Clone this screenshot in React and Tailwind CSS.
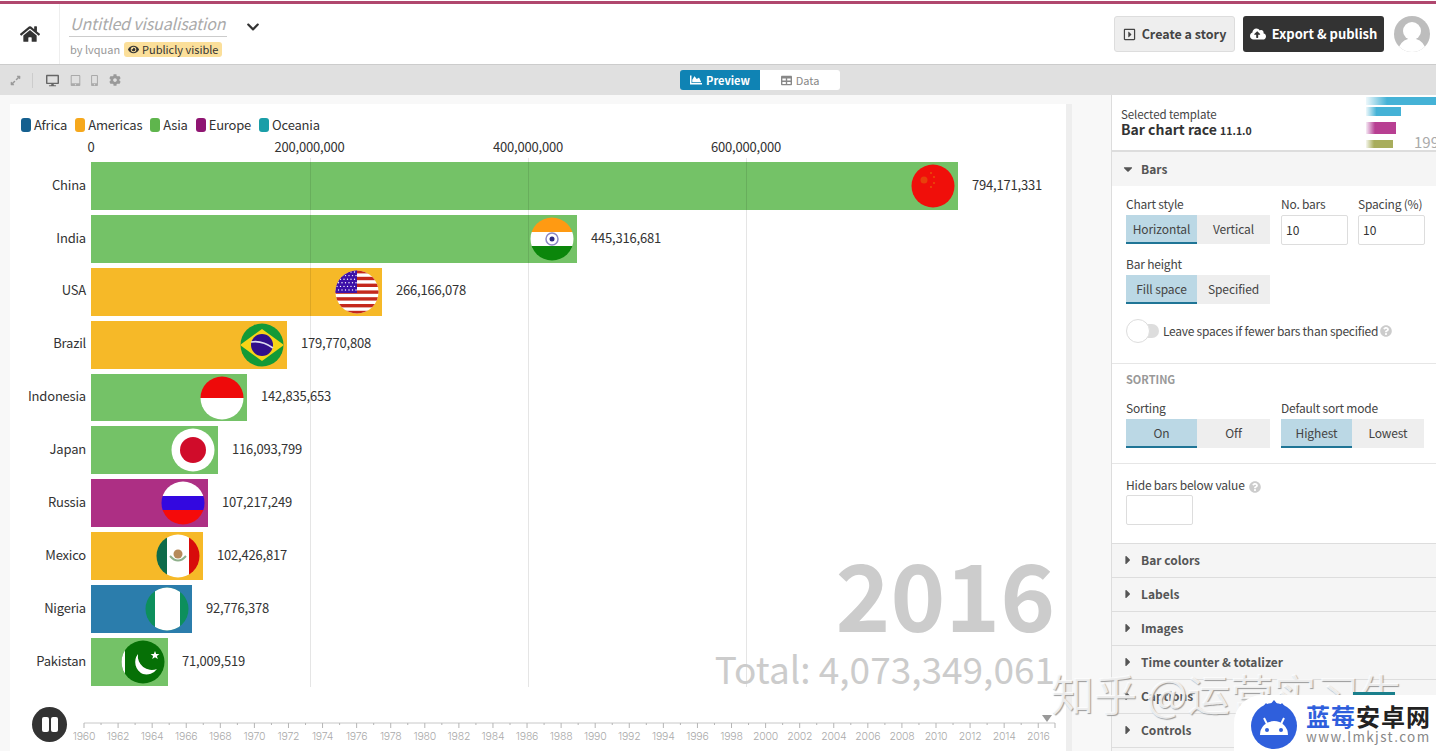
import React from 'react';
import {
  FaHome, FaChevronDown, FaEye, FaCloudUploadAlt, FaCog, FaExpandAlt, FaDesktop, FaTabletAlt,
  FaMobileAlt, FaChartArea, FaTable, FaCaretDown, FaCaretRight, FaQuestionCircle, FaRegCaretSquareRight,
} from 'react-icons/fa';

const GREEN = 'bg-[#74c267]';
const AMBER = 'bg-[#f6b928]';
const PURPLE = 'bg-[#ad2f84]';
const BLUE = 'bg-[#2b7dac]';

const Disc = ({ children, id }) => (
  <svg width="44" height="44" viewBox="0 0 44 44" className="shrink-0">
    <defs>
      <clipPath id={id}>
        <circle cx="22" cy="22" r="21.5" />
      </clipPath>
    </defs>
    <g clipPath={`url(#${id})`}>{children}</g>
  </svg>
);

const China = () => (
  <Disc id="cn">
    <rect width="44" height="44" fill="#f00f0a" />
    <circle cx="13" cy="16" r="3.5" fill="#e8400a" />
    <circle cx="20" cy="9" r="1" fill="#e8500a" />
    <circle cx="23" cy="13" r="1" fill="#e8500a" />
    <circle cx="23" cy="19" r="1" fill="#e8500a" />
    <circle cx="20" cy="23" r="1" fill="#e8500a" />
  </Disc>
);
const India = () => (
  <Disc id="in">
    <rect width="44" height="15" fill="#ff9a12" />
    <rect y="15" width="44" height="14" fill="#fff" />
    <rect y="29" width="44" height="15" fill="#0b860b" />
    <circle cx="22" cy="22" r="6" fill="none" stroke="#8c88c4" strokeWidth="1.5" />
    <circle cx="22" cy="22" r="2.5" fill="#2b2a80" />
  </Disc>
);
const Usa = () => {
  const stripes = [0, 1, 2, 3, 4, 5, 6, 7, 8, 9, 10, 11, 12];
  const stars = [];
  for (let r = 0; r < 6; r++) for (let c = 0; c < 6; c++) stars.push([2 + c * 3.5 + (r % 2) * 1.5, 2 + r * 3.6]);
  return (
    <Disc id="us">
      <rect width="44" height="44" fill="#fff" />
      {stripes.map((i) => i % 2 === 0 && <rect key={i} y={i * 3.4} width="44" height="3.4" fill="#c4281c" />)}
      <rect width="22" height="23" fill="#3c10a8" />
      {stars.map(([x, y], i) => <circle key={i} cx={x} cy={y} r="0.7" fill="#fff" />)}
    </Disc>
  );
};
const Brazil = () => (
  <Disc id="br">
    <rect width="44" height="44" fill="#139a37" />
    <polygon points="0,22 22,6 44,22 22,38" fill="#f7d417" />
    <circle cx="22" cy="22" r="11" fill="#31108a" />
    <path d="M11 19 Q22 17 33 25" stroke="#dcdcf0" strokeWidth="1.6" fill="none" />
  </Disc>
);
const Indonesia = () => (
  <Disc id="id">
    <rect width="44" height="22" fill="#ee0a0a" />
    <rect y="22" width="44" height="22" fill="#fff" />
  </Disc>
);
const Japan = () => (
  <Disc id="jp">
    <rect width="44" height="44" fill="#fff" />
    <circle cx="22" cy="22" r="13" fill="#d00c2a" />
  </Disc>
);
const Russia = () => (
  <Disc id="ru">
    <rect width="44" height="15" fill="#fff" />
    <rect y="15" width="44" height="14" fill="#3308e0" />
    <rect y="29" width="44" height="15" fill="#f50a0a" />
  </Disc>
);
const Mexico = () => (
  <Disc id="mx">
    <rect width="11" height="44" fill="#0e6b4a" />
    <rect x="11" width="22" height="44" fill="#fff" />
    <rect x="33" width="11" height="44" fill="#d80b0b" />
    <circle cx="22" cy="20" r="4.5" fill="#b68a5a" />
    <path d="M14 22 Q22 31 30 22" stroke="#8fb08c" strokeWidth="2" fill="none" />
  </Disc>
);
const Nigeria = () => (
  <Disc id="ng">
    <rect width="44" height="44" fill="#0d8f5c" />
    <rect x="10" width="25" height="44" fill="#fff" rx="4" />
  </Disc>
);
const Pakistan = () => (
  <Disc id="pk">
    <rect width="44" height="44" fill="#067006" />
    <rect width="4" height="44" fill="#fff" />
    <path d="M38 27 A14 14 0 0 1 19 12 A13 13 0 0 0 24 32 A13 13 0 0 0 38 27 Z" fill="#fff" transform="translate(-2 2)" />
    <polygon points="34,11 35.2,14 38.4,14 35.9,16 36.8,19 34,17.2 31.2,19 32.1,16 29.6,14 32.8,14" fill="#fff" />
  </Disc>
);

const ROWS = [
  { name: 'China', value: '794,171,331', width: 867, color: GREEN, Flag: China },
  { name: 'India', value: '445,316,681', width: 486, color: GREEN, Flag: India },
  { name: 'USA', value: '266,166,078', width: 291, color: AMBER, Flag: Usa },
  { name: 'Brazil', value: '179,770,808', width: 196, color: AMBER, Flag: Brazil },
  { name: 'Indonesia', value: '142,835,653', width: 156, color: GREEN, Flag: Indonesia },
  { name: 'Japan', value: '116,093,799', width: 127, color: GREEN, Flag: Japan },
  { name: 'Russia', value: '107,217,249', width: 117, color: PURPLE, Flag: Russia },
  { name: 'Mexico', value: '102,426,817', width: 112, color: AMBER, Flag: Mexico },
  { name: 'Nigeria', value: '92,776,378', width: 101, color: BLUE, Flag: Nigeria },
  { name: 'Pakistan', value: '71,009,519', width: 77, color: GREEN, Flag: Pakistan },
];

const LEGEND = [
  { name: 'Africa', color: 'bg-[#15608f]' },
  { name: 'Americas', color: 'bg-[#f6a81c]' },
  { name: 'Asia', color: 'bg-[#5fb54d]' },
  { name: 'Europe', color: 'bg-[#8f1572]' },
  { name: 'Oceania', color: 'bg-[#1a9ea8]' },
];

const GRID = [
  { x: 81, label: '0' },
  { x: 299.5, label: '200,000,000' },
  { x: 518, label: '400,000,000' },
  { x: 736, label: '600,000,000' },
];

const Timeline = () => {
  const years = [];
  for (let y = 1960; y <= 2016; y++) years.push(y);
  return (
    <svg width="990" height="40" viewBox="0 0 990 40" className="block">
      <line x1="11" x2="982" y1="15" y2="15" stroke="#c8c8c8" strokeWidth="1" />
      {years.map((y) => {
        const x = 11 + (y - 1960) * 17.04;
        const major = y % 2 === 0;
        return (
          <g key={y}>
            <line x1={x} x2={x} y1="15" y2={major ? 20 : 17} stroke="#b5b5b5" />
            {major && (
              <text x={x} y="32" textAnchor="middle" fontSize="10.5" fill="#aaa" fontFamily="Inter, sans-serif" fontWeight="300">
                {y}
              </text>
            )}
          </g>
        );
      })}
      <line x1="982" x2="982" y1="15" y2="20" stroke="#b5b5b5" />
      <polygon points="969,7 979,7 974,14" fill="#999" />
    </svg>
  );
};

const Chart = () => (
  <div className="relative w-[1056px] shrink-0 bg-white pt-3 text-[13px] tracking-[-0.2px]">
    <div className="flex h-[18px] items-center gap-2 pb-[2px] pl-[11px] leading-none text-[#333]">
      {LEGEND.map((l) => (
        <div key={l.name} className="flex items-center gap-[3px]">
          <span className="flex h-[15px] w-[10px] items-center">
            <span className={`mt-[2px] h-[14px] w-[10px] rounded-[3px] ${l.color}`} />
          </span>
          <span>{l.name}</span>
        </div>
      ))}
    </div>

    <div className="relative mt-[4px] h-[18px] leading-[17px] text-[#333]">
      {GRID.map((g) => (
        <span key={g.label} className="absolute top-0 -translate-x-1/2 whitespace-nowrap" style={{ left: g.x }}>
          {g.label}
        </span>
      ))}
    </div>

    <div className="relative mt-1.5 flex flex-col gap-[5px]">
      {ROWS.map(({ name, value, width, color, Flag }) => (
        <div key={name} className="flex h-[47.9px] items-center">
          <div className="mr-[5px] w-[76px] pb-[3px] text-right text-[#333]">{name}</div>
          <div className={`flex h-full items-center justify-end pr-[3px] ${color}`} style={{ width }}>
            <Flag />
          </div>
          <div className="ml-[14px] pb-[3px] text-[#333]">{value}</div>
        </div>
      ))}
      {GRID.slice(1).map((g) => (
        <span key={g.x} className="absolute -top-1 -bottom-px w-px bg-black/10" style={{ left: g.x }} />
      ))}
    </div>

    <div className="absolute right-[11px] top-[434px] text-right tracking-normal text-[#cccccc]">
      <div className="text-[93px] leading-[108px] font-bold">2016</div>
      <div className="text-[37px] leading-[44px]">Total: 4,073,349,061</div>
    </div>

    <div className="mt-[21px] flex h-[47px] items-start pl-[22px]">
      <div className="flex h-[35px] w-[35px] shrink-0 items-center justify-center gap-[2px] rounded-full bg-[#333]">
        <span className="h-[15px] w-[7px] rounded-[2px] bg-white" />
        <span className="h-[15px] w-[7px] rounded-[2px] bg-white" />
      </div>
      <div className="ml-[6px] mt-[1px]">
        <Timeline />
      </div>
    </div>
  </div>
);

const Seg = ({ options, w = ['w-[71px]', 'w-[73px]'] }) => (
  <div className="flex h-[29px] text-xs tracking-[-0.1px] text-[#444]">
    <div className={`flex items-center justify-center border-b-2 border-[#1f7596] bg-[#bbd8e5] ${w[0]}`}>{options[0]}</div>
    <div className={`flex items-center justify-center bg-[#eeeeee] pb-[2px] ${w[1]}`}>{options[1]}</div>
  </div>
);

const Label = ({ children }) => <div className="h-[15px] whitespace-nowrap text-xs leading-[13px] tracking-[-0.2px] text-[#444]">{children}</div>;

const NumInput = ({ value }) => (
  <div className="flex h-[30px] w-[67px] items-center rounded-[2px] border border-[#ddd] bg-white pl-1 text-xs text-[#333]">{value}</div>
);

const Help = () => <FaQuestionCircle className="ml-[2px] inline-block text-[#ccc]" size={12} />;

const Collapsed = ({ name }) => (
  <div className="flex h-[34px] shrink-0 items-center border-b border-[#ddd] bg-[#f5f5f5] pl-[9px] pb-[1px]">
    <FaCaretRight className="text-[#555]" size={14} />
    <span className="ml-[6px] pb-[1px] text-xs font-bold text-[#555]">{name}</span>
  </div>
);

const Thumb = () => (
  <svg width="71" height="55" viewBox="0 0 71 55" className="shrink-0">
    <defs>
      <linearGradient id="tc" x1="0" x2="1" y1="0" y2="0">
        <stop offset="0" stopColor="#4db6d6" stopOpacity="0.1" />
        <stop offset="0.3" stopColor="#45b2d6" />
      </linearGradient>
      <linearGradient id="tp" x1="0" x2="1" y1="0" y2="0">
        <stop offset="0" stopColor="#b03a98" stopOpacity="0.1" />
        <stop offset="0.3" stopColor="#b83f92" />
      </linearGradient>
      <linearGradient id="to" x1="0" x2="1" y1="0" y2="0">
        <stop offset="0" stopColor="#a3aa50" stopOpacity="0.1" />
        <stop offset="0.3" stopColor="#a8ad5c" />
      </linearGradient>
    </defs>
    <rect x="1" y="2" width="70" height="8" fill="url(#tc)" />
    <rect x="1" y="12" width="35" height="9" fill="url(#tc)" />
    <rect x="1" y="27" width="30" height="12" fill="url(#tp)" />
    <rect x="1" y="45" width="27" height="8" fill="url(#to)" />
    <text x="49" y="53" fontSize="15" fill="#aaa">199</text>
  </svg>
);

const Sidebar = () => (
  <div className="flex w-[325px] shrink-0 flex-col overflow-hidden border-l border-[#ddd] bg-white">
    <div className="flex h-[57px] shrink-0 items-start justify-between border-b-2 border-[#ddd] pl-[9px]">
      <div className="pt-[12px]">
        <div className="text-[11.5px] leading-[14px] tracking-[-0.1px] text-[#444]">Selected template</div>
        <div className="text-[14px] leading-[16px] font-bold text-[#333]">
          Bar chart race <span className="text-[10.5px]">11.1.0</span>
        </div>
      </div>
      <Thumb />
    </div>

    <div className="flex h-[34px] shrink-0 items-center bg-[#f5f5f5] pl-[9px]">
      <FaCaretDown className="text-[#555]" size={14} />
      <span className="ml-[6px] pb-[1px] text-xs font-bold text-[#555]">Bars</span>
    </div>

    <div className="shrink-0 border-b border-[#e6e6e6] pl-[14px]">
      <div className="flex gap-[11px] pt-[11px]">
        <div>
          <Label>Chart style</Label>
          <div className="mt-[3px]"><Seg options={['Horizontal', 'Vertical']} /></div>
        </div>
        <div className="flex gap-[10px]">
          <div>
            <Label>No. bars</Label>
            <div className="mt-[3px]"><NumInput value="10" /></div>
          </div>
          <div>
            <Label>Spacing (%)</Label>
            <div className="mt-[3px]"><NumInput value="10" /></div>
          </div>
        </div>
      </div>
      <div className="mt-[12px]">
        <Label>Bar height</Label>
        <div className="mt-[3px]"><Seg options={['Fill space', 'Specified']} /></div>
      </div>
      <div className="mt-[15px] flex h-[44px] items-start">
        <div className="relative h-[24px] w-[33px]">
          <span className="absolute right-0 top-[5px] h-[14px] w-[26px] rounded-full bg-[#dddddd]" />
          <span className="absolute left-0 top-0 h-[24px] w-[24px] rounded-full border border-[#ddd] bg-white" />
        </div>
        <div className="ml-1 flex h-[24px] items-center text-xs tracking-[-0.25px] text-[#444]">
          Leave spaces if fewer bars than specified <Help />
        </div>
      </div>
    </div>

    <div className="shrink-0 border-b border-[#e6e6e6] pl-[14px]">
      <div className="pt-[8px] text-[11px] leading-[14px] font-bold text-[#999]">SORTING</div>
      <div className="mt-[15px] flex h-[62px] gap-[11px]">
        <div>
          <Label>Sorting</Label>
          <div className="mt-[3px]"><Seg options={['On', 'Off']} /></div>
        </div>
        <div>
          <Label>Default sort mode</Label>
          <div className="mt-[3px]"><Seg options={['Highest', 'Lowest']} w={['w-[71px]', 'w-[72px]']} /></div>
        </div>
      </div>
    </div>

    <div className="h-[80px] shrink-0 border-b border-[#ddd] pl-[14px] pt-[14px]">
      <Label>Hide bars below value <Help /></Label>
      <div className="mt-[2px]"><NumInput value="" /></div>
    </div>

    {['Bar colors', 'Labels', 'Images', 'Time counter & totalizer', 'Captions', 'Controls'].map((n) => (
      <Collapsed key={n} name={n} />
    ))}
    <div className="flex-1 bg-[#f5f5f5]" />
  </div>
);

const Avatar = () => (
  <svg width="36" height="36" viewBox="0 0 36 36">
    <defs>
      <clipPath id="av"><circle cx="18" cy="18" r="18" /></clipPath>
    </defs>
    <g clipPath="url(#av)">
      <rect width="36" height="36" fill="#bdbdbd" />
      <circle cx="18" cy="15" r="9" fill="#fff" />
      <path d="M3 36 Q6 25 14 23 L22 23 Q30 25 33 36 Z" fill="#fff" />
    </g>
  </svg>
);

const Watermark = () => (
  <>
    <div className="absolute left-[1051px] top-[666px] whitespace-nowrap text-[43px] leading-[52px] text-white/80 [text-shadow:1px_1px_1px_#9a9a9a]">
      知乎 @运营实习生
    </div>
    <div className="absolute left-[1353px] top-[692px] h-[6px] w-[42px] bg-[#1a7f8c]" />
    <div className="absolute left-[1234px] top-[695px] flex h-[56px] w-[202px] items-center rounded-tl-[28px] bg-white pl-[17px]">
      <svg width="46" height="52" viewBox="0 0 46 52" className="shrink-0">
        <polygon points="10,12 15,6 18,9 23,3 28,9 31,6 36,12" fill="#2f5fdc" />
        <circle cx="23" cy="29" r="23" fill="#2f5fdc" />
        <path d="M9 38 A14 14 0 0 1 37 38 Z" fill="#fff" />
        <line x1="13" y1="21" x2="16" y2="27" stroke="#fff" strokeWidth="2" />
        <line x1="33" y1="21" x2="30" y2="27" stroke="#fff" strokeWidth="2" />
        <circle cx="16" cy="33" r="2" fill="#2f5fdc" />
        <circle cx="30" cy="33" r="2" fill="#2f5fdc" />
      </svg>
      <div className="ml-[9px]">
        <div className="text-[24px] leading-[27px] font-bold tracking-[1px] text-[#222]">
          <span className="text-[#2f5fdc]">蓝莓</span>安卓网
        </div>
        <div className="text-[13.5px] leading-[15px] tracking-[1.4px] text-[#888]">www.lmkjst.com</div>
      </div>
    </div>
  </>
);

export default function App() {
  return (
    <div className="relative flex h-[751px] w-[1436px] flex-col overflow-hidden bg-white font-['Noto_Sans_CJK_SC','Source_Sans_Pro',sans-serif]">
      <div className="h-[4px] shrink-0 border-t border-white bg-[#b0476e]" />

      <header className="flex h-[61px] shrink-0 items-center border-b border-[#ccc] bg-white">
        <div className="flex h-full w-[60px] shrink-0 items-center justify-center border-r border-[#eee]">
          <FaHome className="text-[#333]" size={20} />
        </div>
        <div className="ml-[9px] w-[158px]">
          <div className="border-b border-[#ccc] pb-[1px] pl-[1px] text-[16px] leading-[23px] tracking-[-0.15px] whitespace-nowrap italic text-[#aaa]">Untitled visualisation</div>
          <div className="mt-[5px] flex items-center whitespace-nowrap pl-[1px] text-[11px] leading-[14px]">
            <span className="w-[49px] shrink-0 text-[#999]">by lvquan</span>
            <span className="ml-[5px] flex h-[15px] shrink-0 items-center gap-[3px] rounded-[3px] bg-[#fbdf9a] px-[4px] text-[#333]">
              <FaEye size={11} /> Publicly visible
            </span>
          </div>
        </div>
        <FaChevronDown className="ml-[19px] mb-[14px] text-[#333]" size={14} />

        <div className="ml-auto flex items-center">
          <div className="flex h-[36px] w-[121px] items-center justify-center gap-[6px] rounded-[3px] border border-[#ddd] bg-[#eeeeee] text-[12.5px] font-bold text-[#444]">
            <FaRegCaretSquareRight size={13} /> Create a story
          </div>
          <div className="ml-2 flex h-[36px] w-[141px] items-center justify-center gap-[6px] rounded-[3px] bg-[#333] text-[13px] font-bold text-white">
            <FaCloudUploadAlt size={16} /> Export &amp; publish
          </div>
          <div className="ml-[10px] mr-[6px] flex"><Avatar /></div>
        </div>
      </header>

      <div className="flex h-[30px] shrink-0 items-center bg-[#e0e0e0] pl-[10px]">
        <FaExpandAlt className="text-[#999]" size={11} />
        <span className="ml-[11px] h-[15px] w-px bg-[#ccc]" />
        <FaDesktop className="ml-[13px] text-[#666]" size={13} />
        <FaTabletAlt className="ml-[11px] text-[#aaa]" size={11} />
        <FaMobileAlt className="ml-[8px] text-[#aaa]" size={11} />
        <FaCog className="ml-[9px] text-[#999]" size={12} />
        <div className="ml-[559px] flex h-[20px] overflow-hidden rounded-[3px] text-[11px]">
          <div className="flex w-[80px] items-center justify-center gap-[4px] bg-[#0f83b4] font-bold text-white">
            <FaChartArea size={12} /> Preview
          </div>
          <div className="flex w-[80px] items-center justify-center gap-[4px] bg-white text-[#888]">
            <FaTable size={11} /> Data
          </div>
        </div>
      </div>

      <div className="flex min-h-0 flex-1">
        <div className="flex min-w-0 flex-1 bg-[#f8f8f8] pl-[10px] pt-[9px]">
          <Chart />
          <div className="w-[6px] shrink-0 bg-[#eeeeee]" />
        </div>
        <Sidebar />
      </div>

      <Watermark />
    </div>
  );
}
